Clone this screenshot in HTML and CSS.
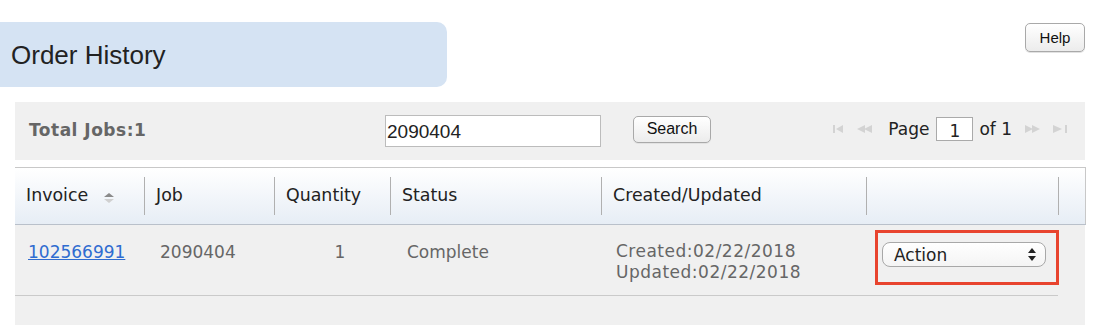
FILE: index.html
```html
<!DOCTYPE html>
<html>
<head>
    <meta charset="UTF-8">
    <title>Order History</title>
    <link rel="stylesheet" href="styles.css">
</head>
<body>
<div class="top">
    <div class="tab"><h1>Order History</h1></div>
    <button class="btn help">Help</button>
</div>

<div class="panel">
    <div class="toolbar">
        <div class="total">Total Jobs:1</div>
        <input class="search-box" type="text" value="2090404">
        <button class="btn search">Search</button>
        <div class="pager">
            <svg class="pg first" width="14" height="8" viewBox="0 0 14 8"><rect x="0" y="0" width="2" height="8"/><polygon points="3,4 10,0 10,8"/></svg>
            <svg class="pg prev" width="17" height="8" viewBox="0 0 17 8"><polygon points="0,4 8,0 8,8"/><polygon points="7,4 15,0 15,8"/></svg>
            <span class="pg-text">Page</span>
            <span class="pg-num">1</span>
            <span class="pg-text">of 1</span>
            <svg class="pg next" width="17" height="8" viewBox="0 0 17 8"><polygon points="0,0 8,4 0,8"/><polygon points="7,0 15,4 7,8"/></svg>
            <svg class="pg last" width="15" height="8" viewBox="0 0 15 8"><polygon points="0,0 9,4 0,8"/><rect x="12" y="0" width="2" height="8"/></svg>
        </div>
    </div>

    <table class="grid">
        <colgroup>
            <col style="width:129px">
            <col style="width:130px">
            <col style="width:116px">
            <col style="width:211px">
            <col style="width:265px">
            <col style="width:192px">
            <col style="width:27px">
        </colgroup>
        <thead>
        <tr>
            <th><div class="th first">Invoice
                <svg class="sort" width="10" height="10" viewBox="0 0 10 10"><polygon points="5,0 10,4 0,4" fill="#8a8a8a"/><polygon points="0,6 10,6 5,10" fill="#d0d0d0"/></svg>
            </div></th>
            <th><div class="th">Job</div></th>
            <th><div class="th">Quantity</div></th>
            <th><div class="th">Status</div></th>
            <th><div class="th">Created/Updated</div></th>
            <th><div class="th"></div></th>
            <th><div class="th"></div></th>
        </tr>
        </thead>
        <tbody>
        <tr class="row">
            <td class="c-inv"><a href="#">102566991</a></td>
            <td class="c-job">2090404</td>
            <td class="c-qty">1</td>
            <td class="c-status">Complete</td>
            <td class="c-date">Created:02/22/2018<br>Updated:02/22/2018</td>
            <td class="c-act">
                <div class="mark">
                    <div class="select">
                        <span>Action</span>
                        <svg width="8" height="13" viewBox="0 0 8 13"><polygon points="4,0 8,5 0,5" fill="#222"/><polygon points="0,8 8,8 4,13" fill="#222"/></svg>
                    </div>
                </div>
            </td>
            <td class="c-end"></td>
        </tr>
        <tr>
            <td class="filler" colspan="7"></td>
        </tr>
        </tbody>
    </table>
</div>
</body>
</html>
```

FILE: styles.css
```css
body, div, h1, table, th, td, span, input, button {
    margin: 0;
    padding: 0;
}

body {
    font-family: "DejaVu Sans", Verdana, sans-serif;
    background: #fff;
    color: #222;
}

.top {
    display: flex;
    justify-content: space-between;
    align-items: flex-start;
    padding-top: 22px;
}

.tab {
    width: 447px;
    height: 65px;
    background: #d5e3f3;
    border-radius: 0 10px 10px 0;
    display: flex;
    align-items: center;
}

.tab h1 {
    font-family: "Liberation Sans", Arial, sans-serif;
    font-weight: normal;
    font-size: 26px;
    color: #222;
    padding-left: 11px;
    padding-top: 2px;
}

.btn {
    font-family: "Liberation Sans", Arial, sans-serif;
    color: #111;
    border: 1px solid #a9a9a9;
    border-radius: 5px;
    background: linear-gradient(#ffffff, #ececec);
    box-shadow: 0 1px 0 #e2e2e2;
}

.help {
    width: 60px;
    height: 29px;
    font-size: 15px;
    margin-top: 1px;
    margin-right: 11px;
}

.panel {
    margin: 15px 11px 0 15px;
    width: 1070px;
}

.toolbar {
    height: 58px;
    background: #f0f0f0;
    display: flex;
    align-items: center;
}

.total {
    width: 356px;
    padding-left: 14px;
    font-weight: bold;
    font-size: 17px;
    letter-spacing: 0.5px;
    color: #666;
    margin-top: -3px;
}

.search-box {
    width: 216px;
    height: 32px;
    box-sizing: border-box;
    border: 1px solid #bcbcbc;
    background: #fff;
    font-family: "Liberation Sans", Arial, sans-serif;
    font-size: 19px;
    color: #222;
    padding: 2px 0 0 1px;
    outline: none;
}

.search {
    width: 78px;
    height: 27px;
    margin-left: 32px;
    margin-top: -4px;
    font-size: 16px;
}

.pager {
    margin-left: auto;
    margin-right: 17px;
    margin-top: -4px;
    display: flex;
    align-items: center;
}

.pg {
    fill: #d3d3d3;
}

.prev {
    margin-left: 10px;
}

.pg-text {
    font-size: 17px;
    color: #222;
}

.prev + .pg-text {
    margin-left: 14px;
}

.pg-num {
    width: 37px;
    height: 24px;
    box-sizing: border-box;
    border: 1px solid #aaa;
    background: #fff;
    font-size: 17px;
    text-align: center;
    line-height: 26px;
    margin: 0 6px 0 7px;
}

.next {
    margin-left: 13px;
}

.last {
    margin-left: 11px;
}

.grid {
    margin-top: 7px;
    width: 1070px;
    border-collapse: collapse;
    table-layout: fixed;
}

.grid thead tr {
    height: 57px;
    background: linear-gradient(#ffffff, #e6edf5);
}

.grid th {
    border-top: 1px solid #c8c8c8;
    border-bottom: 1px solid #b9c0ca;
    padding: 0;
    font-weight: normal;
    text-align: left;
    vertical-align: middle;
}

.grid th:last-child {
    border-right: 1px solid #c8c8c8;
}

.th {
    height: 38px;
    box-sizing: border-box;
    border-left: 1px solid #b0b0b0;
    display: flex;
    align-items: center;
    padding: 0 0 3px 11px;
    font-size: 17.4px;
    color: #222;
}

.th.first {
    border-left: none;
}

.sort {
    margin-left: 16px;
    margin-top: 6px;
}

.grid tbody {
    background: #f0f0f0;
}

.row td {
    height: 71px;
    border-bottom: 1px solid #cacaca;
    vertical-align: top;
    padding-top: 17px;
    font-size: 17px;
    color: #666;
    box-sizing: border-box;
}

.row td.c-end {
    border-bottom: none;
}

.c-inv {
    padding-left: 13px;
}

.c-inv a {
    color: #2f6cd0;
    text-decoration: underline;
}

.c-job {
    padding-left: 16px;
}

.c-qty {
    text-align: center;
    padding-left: 16px;
}

.c-status {
    padding-left: 17px;
}

.row td.c-date {
    padding-left: 15px;
    padding-top: 16px;
    line-height: 21px;
    letter-spacing: 0.5px;
}

.row td.c-act {
    padding-top: 5px;
    padding-left: 9px;
}

.mark {
    width: 184px;
    height: 55px;
    box-sizing: border-box;
    border: 3px solid #e8442e;
    padding: 9px 0 0 4px;
}

.select {
    width: 164px;
    height: 25px;
    box-sizing: border-box;
    border: 1px solid #a8a8a8;
    border-radius: 8px;
    background: linear-gradient(#ffffff, #f4f4f4);
    display: flex;
    align-items: center;
    justify-content: space-between;
    padding: 0 9px 0 11px;
    font-size: 17px;
    color: #222;
}

.filler {
    height: 29px;
}
```
